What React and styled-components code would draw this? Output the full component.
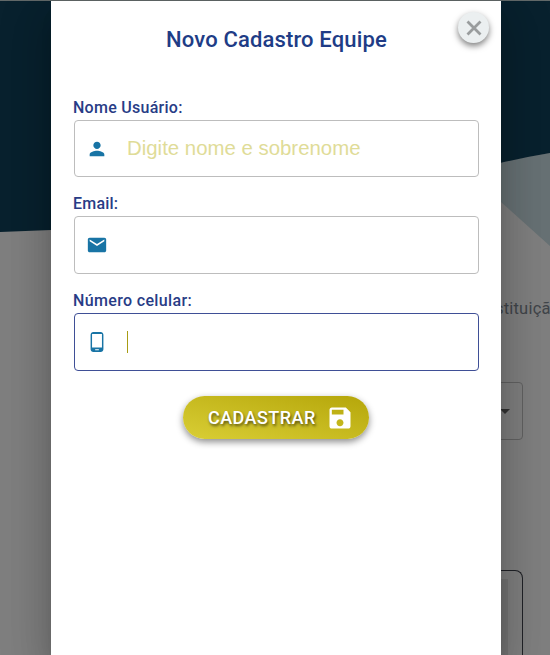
import React from "react";
import styled, { createGlobalStyle } from "styled-components";

const GlobalStyle = createGlobalStyle`
  * { box-sizing: border-box; }
  body { margin: 0; overflow: hidden; background: #7f7f7f; font-family: Roboto, sans-serif; }
`;

const Screen = styled.div`
  position: relative;
  height: 655px;
  overflow: hidden;
  background: #7f7f7f;
`;

const Page = styled.main`
  display: flex;
  flex-direction: column;
  height: 100%;
  border-top: 1px solid #626969;
`;

const Wave = styled.svg`
  display: block;
  flex: none;
  width: 550px;
  height: 279px;
`;

const PageText = styled.p`
  margin: 18px 0 0 481px;
  color: #41454a;
  font-size: 16.5px;
  line-height: 22px;
  letter-spacing: 0.2px;
  white-space: nowrap;
`;

const PageSelect = styled.div`
  display: flex;
  align-items: center;
  justify-content: flex-end;
  width: 472px;
  height: 58px;
  margin: 62px 0 0 51px;
  padding-right: 12px;
  border: 1px solid #626262;
  border-radius: 4px;
`;

const Arrow = styled.svg`
  width: 10px;
  height: 5px;
  fill: #333;
`;

const PageCard = styled.section`
  flex: 1;
  width: 472px;
  margin: 130px 0 0 51px;
  padding: 8px 14px 0;
  border: 1px solid #202227;
  border-bottom: 0;
  border-radius: 8px 8px 0 0;
`;

const CardFill = styled.div`
  height: 100%;
  background: #747474;
`;

const Dialog = styled.section`
  position: absolute;
  top: 1px;
  left: 51px;
  display: flex;
  flex-direction: column;
  align-items: center;
  width: 450px;
  height: 654px;
  padding: 26px 22px 0 23px;
  background: #fff;
  box-shadow: 0 11px 15px -7px rgba(0, 0, 0, 0.2), 0 24px 38px 3px rgba(0, 0, 0, 0.14),
    0 9px 46px 8px rgba(0, 0, 0, 0.12);
`;

const Title = styled.h1`
  margin: 0 0 45px;
  color: #203c86;
  font-size: 22px;
  font-weight: 500;
  line-height: 26px;
  letter-spacing: 0.15px;
  white-space: nowrap;
`;

const CloseButton = styled.button`
  position: absolute;
  top: 11px;
  right: 12px;
  display: grid;
  place-items: center;
  width: 31px;
  height: 31px;
  padding: 0;
  border: 0;
  border-radius: 50%;
  background: #ebeff0;
  box-shadow: 0 3px 6px rgba(0, 0, 0, 0.5);

  svg { width: 16px; height: 16px; stroke: #999c9d; stroke-width: 2.8; }
`;

const Field = styled.div`
  display: flex;
  flex-direction: column;
  width: 100%;
  margin-bottom: ${({ $gap }) => $gap}px;
`;

const Label = styled.label`
  height: 22px;
  margin-left: -1px;
  color: #283c86;
  font-size: 16px;
  font-weight: 500;
  line-height: 20px;
  letter-spacing: ${({ $spacing }) => $spacing}px;
  white-space: nowrap;
`;

const InputBox = styled.div`
  display: flex;
  align-items: center;
  height: ${({ $height }) => $height}px;
  padding-left: 11px;
  border: 1px solid ${({ $focused }) => ($focused ? "#3f4f96" : "#bdbdbd")};
  border-radius: 4px;
`;

const FieldIcon = styled.svg`
  flex: none;
  width: 22px;
  height: 22px;
  margin-right: 19px;
  fill: #1874a5;
`;

const Placeholder = styled.span`
  margin-top: -2px;
  color: #dfdc98;
  font-family: "Liberation Sans", Arial, sans-serif;
  font-size: 20.4px;
  line-height: 24px;
  white-space: nowrap;
`;

const Caret = styled.span`
  width: 1px;
  height: 22px;
  background: #a89c14;
`;

const SubmitButton = styled.button`
  display: flex;
  align-items: center;
  justify-content: space-between;
  width: 186px;
  height: 43px;
  margin-right: 1px;
  padding: 0 15px 0 25px;
  border: 0;
  border-radius: 22px;
  background: linear-gradient(to top right, #d9ce35, #b5a60a);
  box-shadow: 0 3px 7px rgba(0, 0, 0, 0.45);
  color: #fff;
  font-family: Roboto, sans-serif;
  font-size: 18px;
  font-weight: 500;
  line-height: 24px;
  letter-spacing: 0.45px;
  text-shadow: 1px 2px 3px rgba(0, 0, 0, 0.6);

  svg { width: 28px; height: 28px; margin-top: 1px; fill: #fff; }
`;

const paths = {
  person: "M12 12c2.21 0 4-1.79 4-4s-1.79-4-4-4-4 1.79-4 4 1.79 4 4 4zm0 2c-2.67 0-8 1.34-8 4v2h16v-2c0-2.66-5.33-4-8-4z",
  email: "M20 4H4c-1.1 0-2 .9-2 2v12c0 1.1.9 2 2 2h16c1.1 0 2-.9 2-2V6c0-1.1-.9-2-2-2zm0 4-8 5-8-5V6l8 5 8-5v2z",
  phone: "M16 1H8C6.34 1 5 2.34 5 4v16c0 1.66 1.34 3 3 3h8c1.66 0 3-1.34 3-3V4c0-1.66-1.34-3-3-3zm-2 20h-4v-1h4v1zm3.4-3H6.6V3.4h10.8v14.6z",
  save: "M17 3H5c-1.11 0-2 .9-2 2v14c0 1.1.89 2 2 2h14c1.1 0 2-.9 2-2V7l-4-4zm-5 16c-1.66 0-3-1.34-3-3s1.34-3 3-3 3 1.34 3 3-1.34 3-3 3zm3-10H5V5h10v4z",
};

const fields = [
  { label: "Nome Usuário:", icon: "person", height: 57, gap: 17, spacing: 0.27, placeholder: "Digite nome e sobrenome" },
  { label: "Email:", icon: "email", height: 58, gap: 17, spacing: 0.2 },
  { label: "Número celular:", icon: "phone", height: 58, gap: 25, spacing: 0.35, focused: true },
];

export default function App() {
  return (
    <>
      <GlobalStyle />
      <Screen>
        <Page>
          <Wave viewBox="0 0 550 279" aria-hidden="true">
            <path d="M500 161 L550 152 V245 L501 201 L440 150Z" fill="#677174" />
            <path d="M0 0H550V152Q526 156 500 162Q300 222 51 229L0 231Z" fill="#08212e" />
          </Wave>
          <PageText>Instituição</PageText>
          <PageSelect><Arrow viewBox="0 0 10 5"><path d="M0 0h10L5 5z" /></Arrow></PageSelect>
          <PageCard><CardFill /></PageCard>
        </Page>
        <Dialog role="dialog" aria-label="Novo Cadastro Equipe">
          <Title>Novo Cadastro Equipe</Title>
          <CloseButton aria-label="Fechar">
            <svg viewBox="0 0 16 16"><path d="M1.5 1.5 14.5 14.5M14.5 1.5 1.5 14.5" /></svg>
          </CloseButton>
          {fields.map((field) => (
            <Field key={field.label} $gap={field.gap}>
              <Label $spacing={field.spacing}>{field.label}</Label>
              <InputBox $height={field.height} $focused={field.focused}>
                <FieldIcon viewBox="0 0 24 24"><path d={paths[field.icon]} /></FieldIcon>
                {field.placeholder && <Placeholder>{field.placeholder}</Placeholder>}
                {field.focused && <Caret />}
              </InputBox>
            </Field>
          ))}
          <SubmitButton>
            <span>CADASTRAR</span>
            <svg viewBox="0 0 24 24"><path d={paths.save} /></svg>
          </SubmitButton>
        </Dialog>
      </Screen>
    </>
  );
}
